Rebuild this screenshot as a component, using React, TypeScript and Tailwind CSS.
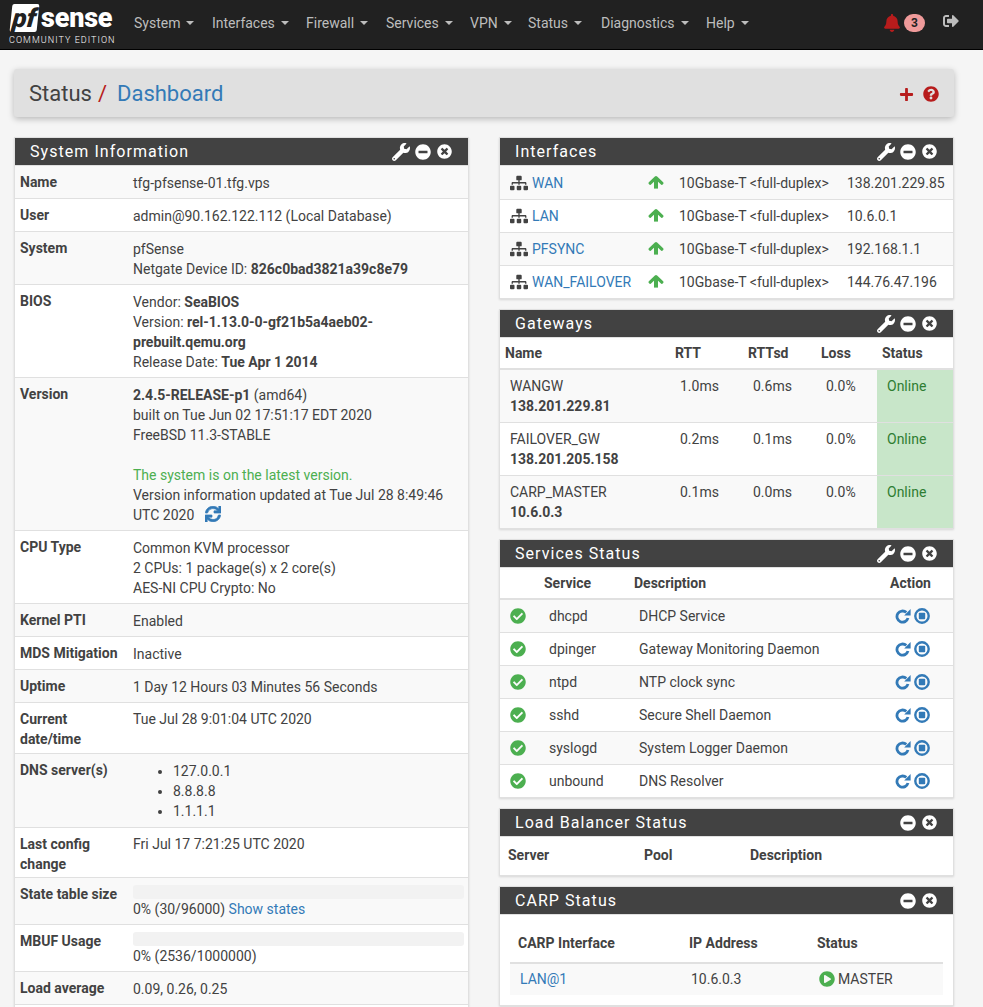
import type { ReactNode } from 'react';
import { FaBell, FaCheckCircle, FaMinusCircle, FaPlayCircle, FaPlus, FaQuestionCircle, FaSignOutAlt, FaSitemap, FaSync, FaTimesCircle, FaWrench } from 'react-icons/fa';

const menu = [
  { label: 'System', w: 'w-[78px]' },
  { label: 'Interfaces', w: 'w-[94px]' },
  { label: 'Firewall', w: 'w-[80px]' },
  { label: 'Services', w: 'w-[84px]' },
  { label: 'VPN', w: 'w-[58px]' },
  { label: 'Status', w: 'w-[73px]' },
  { label: 'Diagnostics', w: 'w-[105px]' },
  { label: 'Help', w: 'w-[60px]' },
];

const interfaces = [
  ['WAN', '138.201.229.85'],
  ['LAN', '10.6.0.1'],
  ['PFSYNC', '192.168.1.1'],
  ['WAN_FAILOVER', '144.76.47.196'],
];

const gateways = [
  ['WANGW', '138.201.229.81', '1.0ms', '0.6ms', '0.0%'],
  ['FAILOVER_GW', '138.201.205.158', '0.2ms', '0.1ms', '0.0%'],
  ['CARP_MASTER', '10.6.0.3', '0.1ms', '0.0ms', '0.0%'],
];

const services = [
  ['dhcpd', 'DHCP Service'],
  ['dpinger', 'Gateway Monitoring Daemon'],
  ['ntpd', 'NTP clock sync'],
  ['sshd', 'Secure Shell Daemon'],
  ['syslogd', 'System Logger Daemon'],
  ['unbound', 'DNS Resolver'],
];

function ArrowUp() {
  return (
    <svg width="16" height="16" viewBox="0 0 16 16" fill="none" stroke="#4caf50" strokeLinecap="round" strokeLinejoin="round">
      <path d="M2.2 8.2 8 2.6l5.8 5.6" strokeWidth="3.2" />
      <path d="M8 3.5V13.6" strokeWidth="4" strokeLinecap="butt" />
    </svg>
  );
}

function Restart() {
  return (
    <svg width="16" height="16" viewBox="0 0 16 16" fill="none" className="text-[#337ab7]">
      <path d="M13 10a5.6 5.6 0 1 1-1.7-5.6" stroke="currentColor" strokeWidth="2.8" />
      <path d="M15.6 1v6.4H9.2z" fill="currentColor" />
    </svg>
  );
}

function StopCircle() {
  return (
    <svg width="16" height="16" viewBox="0 0 16 16" fill="none" className="ml-[3px] text-[#337ab7]">
      <circle cx="8" cy="8" r="6.7" stroke="currentColor" strokeWidth="2.4" />
      <rect x="4.8" y="4.8" width="6.4" height="6.4" rx="0.8" fill="currentColor" />
    </svg>
  );
}

function Panel({ title, wrench = true, children }: { title: string; wrench?: boolean; children: ReactNode }) {
  return (
    <section className="mb-[10px] border border-[#e0e0e0] bg-white shadow-[0_1px_2px_rgba(0,0,0,0.12)]">
      <div className="flex h-[28px] items-center border-b border-[#e0e0e0] bg-[#424242] bg-clip-padding pl-[15px] pr-[16px] text-[16px] tracking-[1.05px] text-white">
        <span className="flex-1">{title}</span>
        {wrench && <FaWrench className="mr-[5px] text-[18px]" />}
        <FaMinusCircle className="mr-[6px] text-[16px]" />
        <FaTimesCircle className="text-[15px]" />
      </div>
      {children}
    </section>
  );
}

function InfoRow({ label, children, h }: { label: ReactNode; children: ReactNode; h?: string }) {
  return (
    <div className={`flex border-t border-[#e0e0e0] pl-[5px] pr-[4px] pt-[6px] pb-[6px] leading-5 odd:bg-[#f9f9f9] even:bg-white ${h ?? ''}`}>
      <div className="w-[113px] shrink-0 font-bold">{label}</div>
      <div className="mt-px -mb-px min-w-0 flex-1">{children}</div>
    </div>
  );
}

function Usage({ children }: { children: ReactNode }) {
  return (
    <>
      <div className="h-[14px] rounded-[3px] bg-[#f2f2f2]" />
      {children}
    </>
  );
}

export default function App() {
  return (
    <div className="h-[1007px] overflow-hidden bg-[#f5f5f5] font-['Roboto',sans-serif] text-[14px] leading-5 text-[#424242]">
      <nav className="flex h-[50px] items-center border-b border-black bg-[#212121] pb-[4px]">
        <div className="ml-[9px] mt-[4px] w-[125px] shrink-0 text-white">
          <div className="flex h-[28px] items-center pl-[2px]">
            <span className="flex h-[28px] w-[27px] skew-x-[-6deg] items-center justify-center rounded-[2px] bg-white text-[26px] leading-none font-black text-[#212121] italic">pf</span>
            <span className="ml-[3px] text-[27px] leading-none font-black tracking-[-0.2px]">sense</span>
          </div>
          <div className="mt-[3px] text-[9px] leading-[10px] font-light tracking-[1.05px]">COMMUNITY EDITION</div>
        </div>
        <ul className="flex flex-1 text-[#bdbdbd]">
          {menu.map((m) => (
            <li key={m.label} className={`flex shrink-0 items-center ${m.w}`}>
              {m.label}
              <span className="ml-[6px] border-x-[4px] border-t-[4px] border-x-transparent border-t-[#bdbdbd]" />
            </li>
          ))}
        </ul>
        <FaBell className="text-[18px] text-[#b71c1c]" />
        <span className="ml-[3px] mr-[18px] flex h-[18px] w-[21px] items-center justify-center rounded-[10px] bg-[#ef9a9a] text-[12px] font-bold text-[#212121]">3</span>
        <FaSignOutAlt className="mr-[24px] mb-[4px] text-[16px] text-[#bdbdbd]" />
      </nav>

      <main className="ml-[14px] w-[940px] pt-[19px]">
        <header className="flex h-[48px] items-center rounded-[3px] bg-[#e0e0e0] pt-[2px] pl-[15px] pr-[15px] text-[22px] shadow-[0_2px_6px_rgba(0,0,0,0.25)]">
          <span>Status</span>
          <span className="ml-[6px] text-[#b71c1c]">/</span>
          <span className="ml-[10px] flex-1 text-[#337ab7]">Dashboard</span>
          <FaPlus className="mr-[9px] text-[15px] text-[#b71c1c]" />
          <FaQuestionCircle className="text-[16px] text-[#b71c1c]" />
        </header>

        <div className="mt-[20px] grid grid-cols-[455px_455px] gap-x-[30px]">
          <div>
            <Panel title="System Information">
              <div className="-mt-px">
                <InfoRow label="Name">tfg-pfsense-01.tfg.vps</InfoRow>
                <InfoRow label="User">admin@90.162.122.112 (Local Database)</InfoRow>
                <InfoRow label="System">
                  pfSense
                  <br />
                  Netgate Device ID: <b>826c0bad3821a39c8e79</b>
                </InfoRow>
                <InfoRow label="BIOS">
                  Vendor: <b>SeaBIOS</b>
                  <br />
                  Version: <b>rel-1.13.0-0-gf21b5a4aeb02-prebuilt.qemu.org</b>
                  <br />
                  Release Date: <b>Tue Apr 1 2014</b>
                </InfoRow>
                <InfoRow label="Version">
                  <b>2.4.5-RELEASE-p1</b> (amd64)
                  <br />
                  built on Tue Jun 02 17:51:17 EDT 2020
                  <br />
                  FreeBSD 11.3-STABLE
                  <br />
                  <br />
                  <span className="text-[#4caf50]">The system is on the latest version.</span>
                  <br />
                  Version information updated at Tue Jul 28 8:49:46 UTC 2020
                  <FaSync className="ml-[11px] inline-block stroke-[24] align-[-2px] text-[16px] text-[#337ab7]" />
                </InfoRow>
                <InfoRow label="CPU Type">
                  Common KVM processor
                  <br />
                  2 CPUs: 1 package(s) x 2 core(s)
                  <br />
                  AES-NI CPU Crypto: No
                </InfoRow>
                <InfoRow label="Kernel PTI">Enabled</InfoRow>
                <InfoRow label="MDS Mitigation">Inactive</InfoRow>
                <InfoRow label="Uptime">1 Day 12 Hours 03 Minutes 56 Seconds</InfoRow>
                <InfoRow label={<>Current<br />date/time</>} h="h-[51px]">
                  <div className="-mt-px">Tue Jul 28 9:01:04 UTC 2020</div>
                </InfoRow>
                <InfoRow label="DNS server(s)" h="h-[74px]">
                  <ul className="list-disc pl-[40px]">
                    <li>127.0.0.1</li>
                    <li>8.8.8.8</li>
                    <li>1.1.1.1</li>
                  </ul>
                </InfoRow>
                <InfoRow label={<>Last config<br />change</>} h="h-[50px]">
                  <div className="-mt-px">Fri Jul 17 7:21:25 UTC 2020</div>
                </InfoRow>
                <InfoRow label="State table size" h="h-[47px]">
                  <Usage>
                    0% (30/96000) <span className="text-[#337ab7]">Show states</span>
                  </Usage>
                </InfoRow>
                <InfoRow label="MBUF Usage" h="h-[47px]">
                  <Usage>0% (2536/1000000)</Usage>
                </InfoRow>
                <InfoRow label="Load average">0.09, 0.26, 0.25</InfoRow>
                <InfoRow label="&nbsp;">&nbsp;</InfoRow>
              </div>
            </Panel>
          </div>

          <div>
            <Panel title="Interfaces">
              {interfaces.map(([name, ip], i) => (
                <div key={name} className={`flex h-[33px] items-center pl-[10px] ${i > 0 ? 'border-t border-[#e0e0e0]' : ''} ${i % 2 === 0 ? 'bg-[#f9f9f9]' : ''}`}>
                  <FaSitemap className="w-[18px] text-[18px] text-[#424242]" />
                  <span className="ml-[4px] w-[116px] text-[#337ab7]">{name}</span>
                  <ArrowUp />
                  <span className="ml-[15px] w-[168px]">10Gbase-T &lt;full-duplex&gt;</span>
                  <span>{ip}</span>
                </div>
              ))}
            </Panel>

            <Panel title="Gateways">
              <div className="flex h-[32px] items-center border-b-2 border-[#e0e0e0] pl-[5px] font-bold">
                <span className="w-[170px]">Name</span>
                <span className="w-[73px]">RTT</span>
                <span className="w-[73px]">RTTsd</span>
                <span className="w-[61px]">Loss</span>
                <span>Status</span>
              </div>
              {gateways.map(([name, ip, rtt, sd, loss], i) => (
                <div key={name} className={`flex ${i > 0 ? 'h-[53px] border-t border-[#e0e0e0]' : 'h-[52px]'} ${i % 2 === 0 ? 'bg-[#f9f9f9]' : ''}`}>
                  <div className="w-[170px] pt-[6px] pl-[10px]">
                    {name}
                    <br />
                    <b>{ip}</b>
                  </div>
                  <div className="w-[73px] pt-[6px] pl-[10px]">{rtt}</div>
                  <div className="w-[73px] pt-[6px] pl-[10px]">{sd}</div>
                  <div className="w-[61px] pt-[6px] pl-[10px]">{loss}</div>
                  <div className="flex-1 bg-[#c8e6c9] pt-[6px] pl-[10px] text-[#2e7d32]">Online</div>
                </div>
              ))}
            </Panel>

            <Panel title="Services Status">
              <div className="flex h-[32px] items-center border-b-2 border-[#e0e0e0] font-bold">
                <span className="ml-[44px] w-[90px]">Service</span>
                <span className="w-[256px]">Description</span>
                <span>Action</span>
              </div>
              {services.map(([name, desc], i) => (
                <div key={name} className={`flex items-center ${i > 0 ? 'h-[33px] border-t border-[#e0e0e0]' : 'h-[32px]'} ${i % 2 === 0 ? 'bg-[#f9f9f9]' : ''}`}>
                  <FaCheckCircle className="ml-[10px] text-[16px] text-[#4caf50]" />
                  <span className="ml-[23px] w-[90px]">{name}</span>
                  <span className="w-[256px]">{desc}</span>
                  <Restart />
                  <StopCircle />
                </div>
              ))}
            </Panel>

            <Panel title="Load Balancer Status" wrench={false}>
              <div className="flex h-[38px] items-center pb-[3px] font-bold">
                <span className="ml-[8px] w-[136px]">Server</span>
                <span className="w-[106px]">Pool</span>
                <span>Description</span>
              </div>
            </Panel>

            <Panel title="CARP Status" wrench={false}>
              <div className="px-[10px] pb-[10px]">
                <div className="flex h-[49px] items-end border-b-2 border-[#e0e0e0] pb-[9px] font-bold">
                  <span className="ml-[8px] w-[171px]">CARP Interface</span>
                  <span className="w-[128px]">IP Address</span>
                  <span>Status</span>
                </div>
                <div className="flex h-[31px] items-center bg-[#f9f9f9] pb-[2px]">
                  <span className="ml-[10px] w-[171px] text-[#337ab7]">LAN@1</span>
                  <span className="w-[128px]">10.6.0.3</span>
                  <FaPlayCircle className="text-[16px] text-[#4caf50]" />
                  <span className="ml-[3px]">MASTER</span>
                </div>
              </div>
            </Panel>
          </div>
        </div>
      </main>
    </div>
  );
}
